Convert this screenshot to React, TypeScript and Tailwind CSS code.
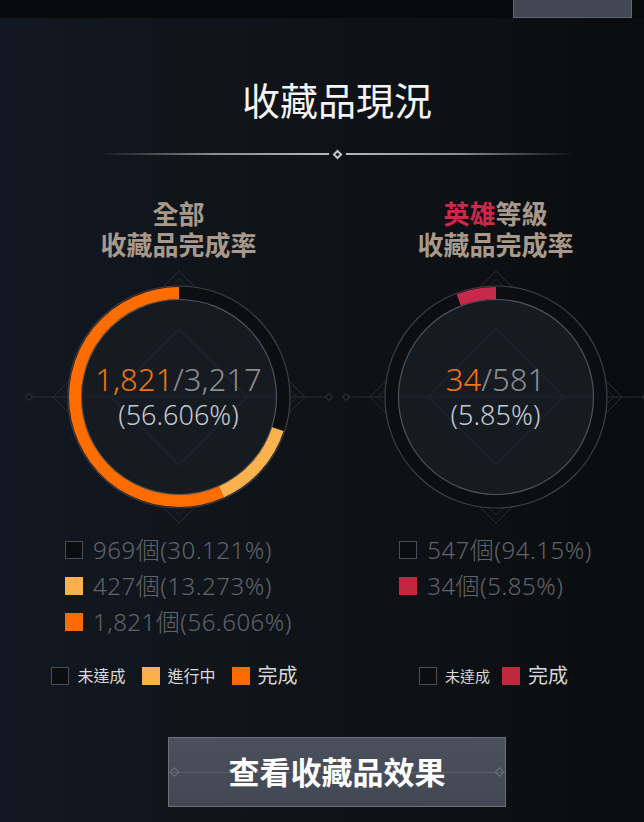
import type { ReactNode } from 'react'

const FONT = { fontFamily: '"Noto Sans", "Noto Sans CJK TC", sans-serif' }

type Seg = { from: number; to: number; color: string }

function pt(cx: number, cy: number, r: number, a: number) {
  const rad = (a * Math.PI) / 180
  return [cx + r * Math.sin(rad), cy - r * Math.cos(rad)]
}

function arc(cx: number, cy: number, r: number, from: number, to: number) {
  const [x1, y1] = pt(cx, cy, r, from)
  const [x2, y2] = pt(cx, cy, r, to)
  const large = to - from > 180 ? 1 : 0
  return `M ${x1} ${y1} A ${r} ${r} 0 ${large} 1 ${x2} ${y2}`
}

function diamond(cx: number, cy: number, h: number) {
  return `${cx},${cy - h} ${cx + h},${cy} ${cx},${cy + h} ${cx - h},${cy}`
}

function Ring({ segments, children }: { segments: Seg[]; children: ReactNode }) {
  const cx = 160
  const cy = 130
  return (
    <div className="relative h-[260px] w-[320px] shrink-0">
      <svg width="320" height="260" viewBox="0 0 320 260" className="absolute inset-0">
        <line x1={cx - 150} y1={cy} x2={cx + 150} y2={cy} stroke="#262c34" strokeWidth="1" />
        <polygon points={diamond(cx - 150, cy, 3.5)} fill="#0f1318" stroke="#3a4049" strokeWidth="1" />
        <polygon points={diamond(cx + 150, cy, 3.5)} fill="#0f1318" stroke="#3a4049" strokeWidth="1" />
        <polygon points={diamond(cx, cy, 126)} fill="none" stroke="#262c34" strokeWidth="1" />
        <polygon points={diamond(cx, cy, 118)} fill="none" stroke="#20252c" strokeWidth="1" />
        <circle cx={cx} cy={cy} r="111" fill="#0c0e11" stroke="#3d4147" strokeWidth="1.2" />
        <circle cx={cx} cy={cy} r="97.5" fill="#161b22" stroke="#4f545b" strokeWidth="1.2" />
        <polygon points={diamond(cx, cy, 68)} fill="none" stroke="#232a33" strokeWidth="1" />
        <line x1={cx - 97} y1={cy} x2={cx + 97} y2={cy} stroke="#1f252d" strokeWidth="1" />
        {segments.map((s, i) => (
          <path key={i} d={arc(cx, cy, 104, s.from, s.to)} fill="none" stroke={s.color} strokeWidth="12" />
        ))}
      </svg>
      <div className="absolute inset-0 flex flex-col items-center justify-center pb-[2px]">{children}</div>
    </div>
  )
}

function Box({ color }: { color?: string }) {
  return color ? (
    <span className="h-[18px] w-[18px] shrink-0" style={{ backgroundColor: color }} />
  ) : (
    <span className="h-[18px] w-[18px] shrink-0 border border-[#4a4e54] bg-[#0b0d10]" />
  )
}

function Row({ color, text }: { color?: string; text: string }) {
  return (
    <div className="flex h-9 items-center gap-[10px]">
      <Box color={color} />
      <span className="text-[24px] font-light tracking-[0.5px] text-[#606469]">{text}</span>
    </div>
  )
}

function Key({ color, label, size }: { color?: string; label: string; size: string }) {
  return (
    <div className="flex items-center gap-2">
      <Box color={color} />
      <span className={`${size} text-[#d8d8d8]`}>{label}</span>
    </div>
  )
}

function Subtitle({ children }: { children: ReactNode }) {
  return (
    <div className="text-center text-[26px] leading-[31px] font-bold text-[#a8998b]">
      {children}
      <div>收藏品完成率</div>
    </div>
  )
}

export default function App() {
  return (
    <div className="h-[822px] w-[644px] overflow-hidden bg-gradient-to-r from-[#121821] via-[#0f1318] to-[#0a0c0f]" style={FONT}>
      <div className="flex h-[18px] justify-end bg-[#07090b] pr-[12px]">
        <div className="h-[18px] w-[119px] border-x border-b border-[#5f6672] bg-[#414853]" />
      </div>

      <div className="w-[674px]">
        <h1 className="mt-[60px] text-center text-[38px] leading-[44px] font-normal text-[#f4f4f4]">收藏品現況</h1>

        <div className="mt-[27px] flex h-[10px] items-center justify-center gap-[5px]">
          <div className="h-[2px] w-[229px] bg-gradient-to-r from-transparent via-[#8a8c90] to-[#b8b8b8]" />
          <div className="h-[7px] w-[7px] rotate-45 border-2 border-[#c4c4c4] bg-[#0f1318]" />
          <div className="h-[2px] w-[229px] bg-gradient-to-r from-[#b8b8b8] via-[#8a8c90] to-transparent" />
        </div>

        <div className="mt-[40px] flex pl-[20px]">
          {/* 全部 */}
          <div className="flex w-[317px] flex-col items-center">
            <Subtitle>
              <div>全部</div>
            </Subtitle>
            <div className="mt-[6px] flex w-full justify-center">
              <Ring
                segments={[
                  { from: 108, to: 156, color: '#f9b24e' },
                  { from: 156, to: 360, color: '#ff6d00' },
                ]}
              >
                <div className="text-[31px] leading-[38px] font-light">
                  <span className="text-[#f3740f]">1,821</span>
                  <span className="text-[#8b8d90]">/3,217</span>
                </div>
                <div className="text-[27px] leading-[34px] font-light text-[#c5c9ce]">(56.606%)</div>
              </Ring>
            </div>
            <div className="mt-[5px] h-[108px]">
              <Row text="969個(30.121%)" />
              <Row color="#fbb04e" text="427個(13.273%)" />
              <Row color="#ff6a00" text="1,821個(56.606%)" />
            </div>
            <div className="mt-[18px] flex h-9 items-center gap-4 pr-[8px]">
              <Key label="未達成" size="text-[16px]" />
              <Key color="#fbb04e" label="進行中" size="text-[16px]" />
              <Key color="#ff6a00" label="完成" size="text-[20px]" />
            </div>
          </div>

          {/* 英雄等級 */}
          <div className="flex w-[317px] flex-col items-center">
            <Subtitle>
              <div>
                <span className="text-[#c72a4b]">英雄</span>等級
              </div>
            </Subtitle>
            <div className="mt-[6px] flex w-full justify-center">
              <Ring segments={[{ from: 339, to: 360, color: '#c8294b' }]}>
                <div className="text-[31px] leading-[38px] font-light">
                  <span className="text-[#f3740f]">34</span>
                  <span className="text-[#8b8d90]">/581</span>
                </div>
                <div className="text-[27px] leading-[34px] font-light text-[#c5c9ce]">(5.85%)</div>
              </Ring>
            </div>
            <div className="mt-[5px] h-[108px]">
              <Row text="547個(94.15%)" />
              <Row color="#c0283f" text="34個(5.85%)" />
            </div>
            <div className="mt-[18px] flex h-9 items-center gap-3 pr-[4px]">
              <Key label="未達成" size="text-[15px]" />
              <Key color="#c0283f" label="完成" size="text-[20px]" />
            </div>
          </div>
        </div>

        <div className="mt-[43px] flex justify-center">
          <button className="relative flex h-[70px] w-[338px] items-center justify-center border border-[#6b717b] bg-gradient-to-b from-[#4b515c] to-[#424853]">
            <span className="absolute inset-x-0 top-1/2 h-px bg-[#59606b]" />
            <span className="absolute top-1/2 left-[2px] h-[7px] w-[7px] -translate-y-1/2 rotate-45 border border-[#6b717b]" />
            <span className="absolute top-1/2 right-[2px] h-[7px] w-[7px] -translate-y-1/2 rotate-45 border border-[#6b717b]" />
            <span className="relative text-[31px] font-bold text-white">查看收藏品效果</span>
          </button>
        </div>
      </div>
    </div>
  )
}
